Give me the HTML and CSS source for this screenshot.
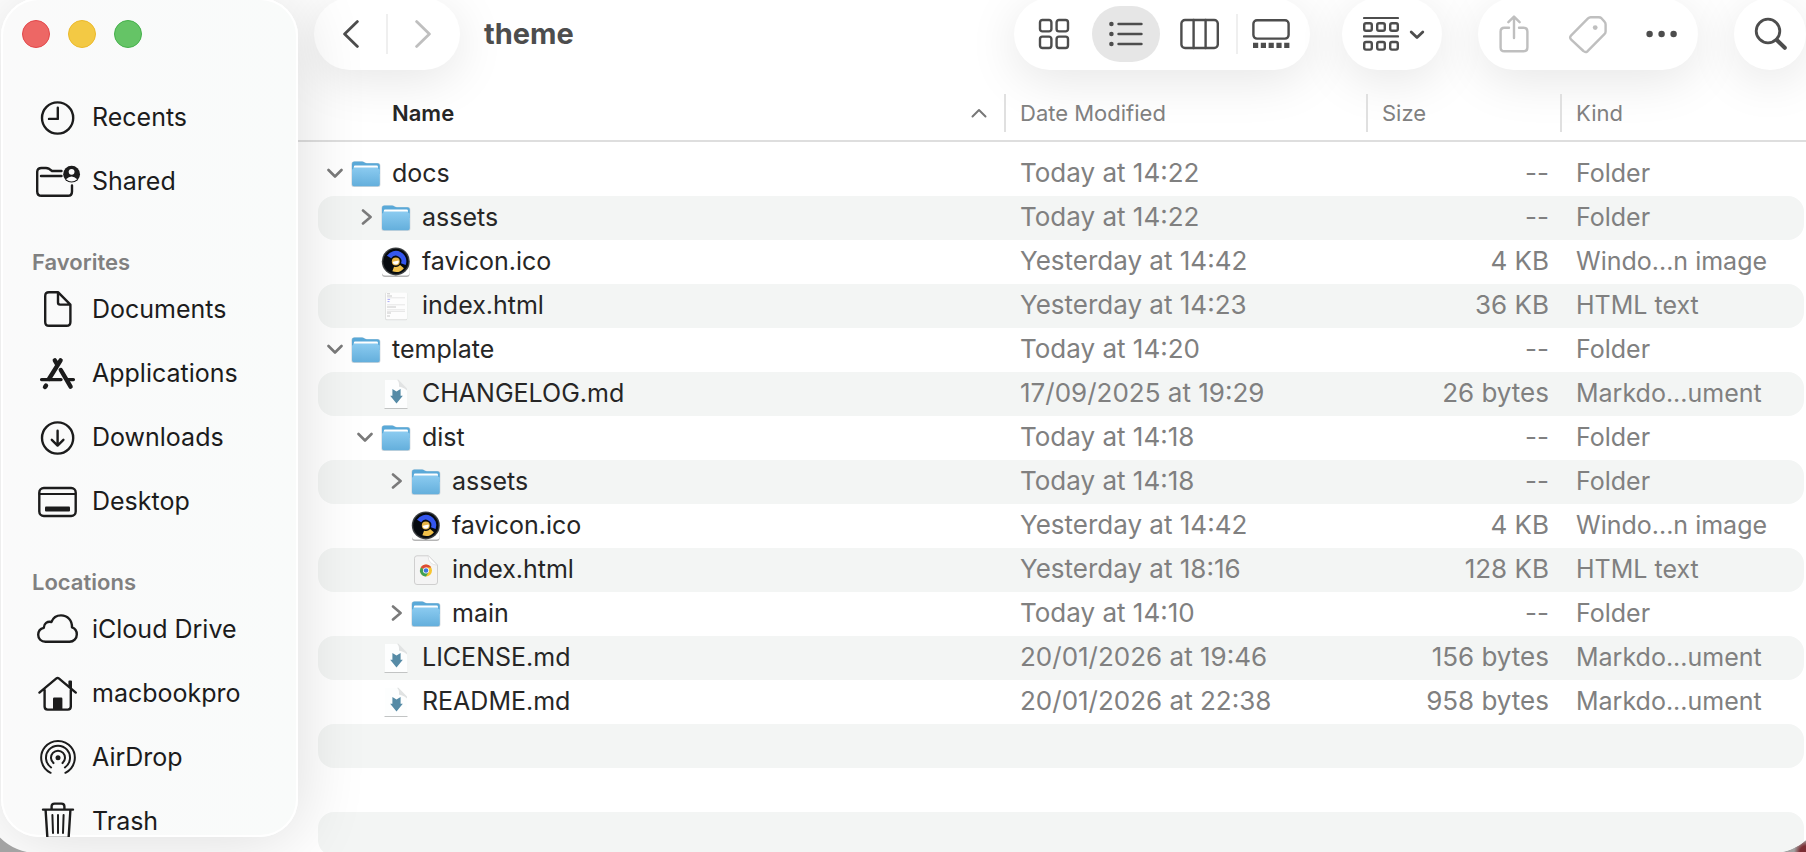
FILE: index.html
```html
<!DOCTYPE html>
<html lang="en">
<head>
    <meta charset="UTF-8">
    <meta name="viewport" content="width=device-width, initial-scale=1.0">
    <title>theme</title>
    <link rel="stylesheet" href="styles.css">
</head>
<body>
    <!-- Shared file icons -->
    <svg class="icon-defs" width="0" height="0" aria-hidden="true">
        <defs>
            <linearGradient id="folder-front" x1="0" y1="0" x2="0" y2="1">
                <stop offset="0" stop-color="#8bcbf0"/>
                <stop offset="1" stop-color="#64afdc"/>
            </linearGradient>
        </defs>
        <symbol id="chevron-down" viewBox="0 0 16 16">
            <path d="M1.5 5L8 11.5L14.5 5" fill="none" stroke="#7a7a7a" stroke-width="2.6" stroke-linecap="round" stroke-linejoin="round"/>
        </symbol>
        <symbol id="chevron-right" viewBox="0 0 16 16">
            <path d="M6 1.5L13.6 8L6 14.5" fill="none" stroke="#7a7a7a" stroke-width="2.6" stroke-linecap="round" stroke-linejoin="round"/>
        </symbol>
        <symbol id="folder" viewBox="0 0 30 30">
            <path d="M.4 5Q.4 2.4 3 2.4H11Q12.5 2.4 13.5 3.2T16 4H26.6Q29.4 4 29.4 6.6V26Q29.4 28 27.4 28H2.6Q.4 28 .4 26Z" fill="#d3d8dc"/>
            <path d="M1 5Q1 2.6 3.4 2.6H11Q12.5 2.6 13.5 3.4T16 4.2H26.4Q28.8 4.2 28.8 6.6V15H1Z" fill="#5aa9d8"/>
            <path d="M2.8 8Q2.8 6.6 4.2 6.6H25.6Q27 6.6 27 8V12H2.8Z" fill="#fff"/>
            <path d="M1 10.5Q2.8 10.5 3 8.6H26.8Q27 10.5 28.8 10.5V25.2Q28.8 27.2 26.8 27.2H3Q1 27.2 1 25.2Z" fill="url(#folder-front)"/>
        </symbol>
        <symbol id="ico-file" viewBox="0 0 30 30">
            <path d="M1 18H28.6V27Q28.6 30 25.6 30H4Q1 30 1 27Z" fill="#b5b5b5"/>
            <path d="M1 17H28.6V25.5Q28.6 28.5 25.6 28.5H4Q1 28.5 1 25.5Z" fill="#fff"/>
            <circle cx="14.8" cy="14.4" r="14" fill="#3d4042"/>
            <circle cx="14.8" cy="14.4" r="12.6" fill="#070b0f"/>
            <path d="M8.1 10A8 8 0 0 1 22.3 17.2" fill="none" stroke="#3557ee" stroke-width="5"/>
            <path d="M21 19.6A8 8 0 0 1 12.2 22" fill="none" stroke="#f0c04a" stroke-width="5"/>
            <circle cx="14.8" cy="14.4" r="4" fill="#e5b345"/>
            <path d="M11.8 14.8L17.6 13.6A3 3 0 0 1 11.8 15.4Z" fill="#fff"/>
        </symbol>
        <symbol id="html-page" viewBox="0 0 30 30">
            <rect x="4.2" y="1.2" width="22" height="28" rx="1.5" fill="#dcdedd"/>
            <rect x="5" y="1.2" width="21" height="27" rx="1" fill="#fdfdfd"/>
            <path d="M6 2.8h3M6 5h5M6 16h9M6 22h4M6 25h3" stroke="#c9c9c9"/>
            <path d="M6 6.8h18M6 13.8h18M6 18.8h18M6 20.4h18" stroke="#e6e6e6"/>
            <path d="M6.5 8.4h2.6M6.5 10.6h2" stroke="#a9a9f5"/>
        </symbol>
        <symbol id="md-page" viewBox="0 0 30 30">
            <path d="M3.5 29.5H26.5" stroke="#c2c4c4"/>
            <path d="M4 1H17L26 10V29H4Z" fill="#fdfefe"/>
            <path d="M16 .8Q18.5 3 18 7.8Q21.5 7.8 26 11.5V9.5L17.5 .8Z" fill="#e1e3e3"/>
            <path d="M11.4 10L15.5 12.4L19.6 10V16.8H21.8L15.5 24.6L9.2 16.8H11.4Z" fill="#568ba6"/>
        </symbol>
        <symbol id="chrome-page" viewBox="0 0 30 30">
            <path d="M6 .8H17.5L26.5 10V27Q26.5 29.5 24 29.5H6Q3.5 29.5 3.5 27V3.3Q3.5 .8 6 .8Z" fill="#f4f4f4" stroke="#cfcfcf"/>
            <path d="M17 1Q17.5 9.8 26.3 10.2L17.6 1Z" fill="#fff" stroke="#dadada" stroke-width=".7"/>
            <circle cx="15" cy="15.5" r="6" fill="#f7c52f"/>
            <path d="M15 15.5L9.8 12.5A6 6 0 0 1 20.2 12.5H15Z" fill="#dc4a38"/>
            <path d="M15 15.5L9.8 12.5A6 6 0 0 0 15 21.5L17.6 17Z" fill="#3fa055"/>
            <circle cx="15" cy="15.5" r="3" fill="#fff"/>
            <circle cx="15" cy="15.5" r="2.3" fill="#3e76e0"/>
        </symbol>
    </svg>

    <div class="window">
        <!-- Sidebar -->
        <aside class="sidebar">
            <div class="traffic-lights">
                <button class="light close" aria-label="Close"></button>
                <button class="light minimize" aria-label="Minimize"></button>
                <button class="light zoom" aria-label="Zoom"></button>
            </div>
            <nav>
                <a class="side-item" href="#">
                    <svg class="side-icon" viewBox="0 0 48 40"><circle cx="23.6" cy="21" r="15.6"/><path d="M23.8 10.8V21.9H15"/></svg>
                    Recents
                </a>
                <a class="side-item" href="#">
                    <svg class="side-icon" viewBox="0 0 48 40">
                        <path d="M27.5 10H18L14.6 7.6Q13.6 7 12 7H7.5Q3.2 7 3.2 11V30.5Q3.2 34.8 7.5 34.8H34Q38 34.8 38 30.5V24.5M7 15H27.5"/>
                        <circle class="solid" cx="37.6" cy="13.2" r="8.4"/>
                        <circle class="knockout" cx="37.6" cy="10.8" r="2.9"/>
                        <path class="knockout" d="M32 18.2Q37.6 12.8 43.2 18.2Q37.6 22.6 32 18.2Z"/>
                    </svg>
                    Shared
                </a>
                <h2>Favorites</h2>
                <a class="side-item" href="#">
                    <svg class="side-icon" viewBox="0 0 48 40"><path d="M15 3.2H24L36.4 15.6V33Q36.4 36.8 32.6 36.8H15Q11.2 36.8 11.2 33V7Q11.2 3.2 15 3.2ZM24 3.5V13.6Q24 15.6 26 15.6H36"/></svg>
                    Documents
                </a>
                <a class="side-item" href="#">
                    <svg class="side-icon" viewBox="0 0 48 40">
                        <path class="thick" d="M26.6 7.4L15 26M20.8 7.4L23 11M26.8 17L36.6 33.6M12 32.6L11 34"/>
                        <path d="M7.6 26.6H27M34 26.6H39.4" stroke-width="3.4"/>
                    </svg>
                    Applications
                </a>
                <a class="side-item" href="#">
                    <svg class="side-icon" viewBox="0 0 48 40"><circle cx="23.6" cy="21" r="15.6"/><path d="M23.6 13.8V28.4M17.8 22.8L23.6 28.6L29.4 22.8"/></svg>
                    Downloads
                </a>
                <a class="side-item" href="#">
                    <svg class="side-icon" viewBox="0 0 48 40">
                        <rect x="5.3" y="7" width="36.4" height="28" rx="4.5"/>
                        <path d="M5.5 13H41.5" stroke-width="1.8"/>
                        <rect class="solid" x="11" y="25.4" width="25" height="5" rx="1"/>
                    </svg>
                    Desktop
                </a>
                <h2>Locations</h2>
                <a class="side-item" href="#">
                    <svg class="side-icon" viewBox="0 0 48 40"><path d="M11.5 32.8C7 32.8 4.2 29.6 4.2 25.8C4.2 22 6.6 19.6 9.8 18.8C9.8 14.4 13.4 12 17.4 13C19 9 22.6 6.4 27 6.4C33.6 6.4 38.2 11.4 38 18.4C41 19.4 42.8 22 42.8 25.4C42.8 29.5 39.6 32.8 35.5 32.8Z"/></svg>
                    iCloud Drive
                </a>
                <a class="side-item" href="#">
                    <svg class="side-icon" viewBox="0 0 48 40">
                        <path d="M5.4 19.6L22.4 5.4Q23.6 4.4 24.8 5.4L41.8 19.6M10.6 17V33.6Q10.6 36.6 13.6 36.6H33.8Q36.8 36.6 36.8 33.6V17"/>
                        <path class="solid" d="M34.4 13V8.4Q34.4 7.4 35.4 7.4H37Q38 7.4 38 8.4V16ZM19 36.6V25.8Q19 24.6 20.2 24.6H27.2Q28.4 24.6 28.4 25.8V36.6Z"/>
                    </svg>
                    macbookpro
                </a>
                <a class="side-item" href="#">
                    <svg class="side-icon" viewBox="0 0 48 40">
                        <path d="M16.6 35.8A16.8 16.8 0 1 1 31.4 35.8M17.1 30.5A12 12 0 1 1 30.9 30.5M19.5 26.1A7 7 0 1 1 28.5 26.1" stroke-width="2"/>
                        <circle class="solid" cx="24" cy="20.7" r="2.5"/>
                    </svg>
                    AirDrop
                </a>
                <a class="side-item" href="#">
                    <svg class="side-icon" viewBox="0 0 48 40">
                        <path d="M9 8.6H39M17.6 8.4V5.6Q17.6 2.6 20.6 2.6H27.4Q30.4 2.6 30.4 5.6V8.4M11.6 9L13.4 37H34.6L36.4 9"/>
                        <path d="M18.4 14L19 32M24 14V32M29.6 14L29 32" stroke-width="2"/>
                    </svg>
                    Trash
                </a>
            </nav>
        </aside>

        <main class="content">
            <!-- Toolbar -->
            <header class="toolbar">
                <div class="pill history">
                    <button aria-label="Back"><svg width="18" height="30" viewBox="0 0 18 30"><path d="M16.4 2.6L3.6 15L16.4 27.4" stroke-width="2.8"/></svg></button>
                    <span class="divider"></span>
                    <button class="dim" aria-label="Forward"><svg width="18" height="30" viewBox="0 0 18 30"><path d="M1.6 2.6L14.4 15L1.6 27.4" stroke-width="2.8"/></svg></button>
                </div>
                <h1>theme</h1>
                <div class="view-options">
                    <div class="pill views">
                        <button aria-label="Icons">
                            <svg width="32" height="32" viewBox="0 0 32 32"><rect x="2" y="2" width="11.4" height="11.4" rx="2.4"/><rect x="18.6" y="2" width="11.4" height="11.4" rx="2.4"/><rect x="2" y="18.6" width="11.4" height="11.4" rx="2.4"/><rect x="18.6" y="18.6" width="11.4" height="11.4" rx="2.4"/></svg>
                        </button>
                        <button class="selected" aria-label="List">
                            <svg width="34" height="26" viewBox="0 0 34 26"><path d="M9.6 3H32.4M9.6 13H32.4M9.6 23H32.4" stroke-width="2.6"/><circle class="solid" cx="2.4" cy="3" r="2.3"/><circle class="solid" cx="2.4" cy="13" r="2.3"/><circle class="solid" cx="2.4" cy="23" r="2.3"/></svg>
                        </button>
                        <button aria-label="Columns">
                            <svg width="40" height="32" viewBox="0 0 40 32"><rect x="2.4" y="2" width="36.4" height="28" rx="3.6"/><path d="M14.6 2V30M26.6 2V30"/></svg>
                        </button>
                        <span class="divider"></span>
                        <button aria-label="Gallery">
                            <svg width="40" height="32" viewBox="0 0 40 32"><rect x="1.4" y="2.2" width="35.2" height="18.4" rx="3.6"/><path d="M1 27.4H38" stroke-width="5.2" stroke-linecap="butt" stroke-dasharray="5.2 2.6"/></svg>
                        </button>
                    </div>
                    <div class="pill group-by">
                        <button aria-label="Group by">
                            <svg width="36" height="36" viewBox="0 0 36 36"><path d="M1 2H35M1 20.4H35" stroke-width="2.2"/><rect x="1.2" y="7.2" width="7.6" height="7.6" rx="1.8"/><rect x="14.2" y="7.2" width="7.6" height="7.6" rx="1.8"/><rect x="27.2" y="7.2" width="7.6" height="7.6" rx="1.8"/><rect x="1.2" y="26" width="7.6" height="7.6" rx="1.8"/><rect x="14.2" y="26" width="7.6" height="7.6" rx="1.8"/><rect x="27.2" y="26" width="7.6" height="7.6" rx="1.8"/></svg>
                            <svg width="16" height="12" viewBox="0 0 16 12"><path d="M2.2 4L8 9.6L13.8 4" stroke-width="2.8"/></svg>
                        </button>
                    </div>
                </div>
                <div class="pill actions">
                    <button class="dim" aria-label="Share">
                        <svg width="32" height="38" viewBox="0 0 32 38"><path d="M10 12.8H5.4Q1.6 12.8 1.6 16.6V32.4Q1.6 36.2 5.4 36.2H24.6Q28.4 36.2 28.4 32.4V16.6Q28.4 12.8 24.6 12.8H20M15 23V1.8M9.4 7.2L15 1.6L20.6 7.2"/></svg>
                    </button>
                    <button class="dim" aria-label="Tags">
                        <svg width="40" height="40" viewBox="0 0 40 40"><path d="M22.6 3.2H30.8Q32.4 3.2 33.4 4.2L36.6 7.8Q37.6 8.8 37.6 10.4V17.4Q37.6 19 36.4 20.2L19.6 37.2Q17.4 39 15.4 37L3.2 25.6Q1 23.6 3.2 21.4L20 4.4Q21.2 3.2 22.6 3.2Z"/><circle class="solid" cx="27.2" cy="13.6" r="2.4"/></svg>
                    </button>
                    <button aria-label="More">
                        <svg width="32" height="8" viewBox="0 0 32 8"><circle class="solid" cx="4.6" cy="4" r="3.2"/><circle class="solid" cx="16.6" cy="4" r="3.2"/><circle class="solid" cx="28.6" cy="4" r="3.2"/></svg>
                    </button>
                </div>
                <div class="pill search">
                    <button aria-label="Search">
                        <svg width="34" height="34" viewBox="0 0 34 34"><circle cx="15" cy="14" r="11.8" stroke-width="2.8"/><path d="M23.8 23L31.8 30.8" stroke-width="4"/></svg>
                    </button>
                </div>
            </header>

            <!-- File list -->
            <table class="files">
                <thead>
                    <tr>
                        <th class="sorted">Name <svg width="16" height="10" viewBox="0 0 16 10"><path d="M1.5 8.5L8 2L14.5 8.5"/></svg></th>
                        <th>Date Modified</th>
                        <th>Size</th>
                        <th>Kind</th>
                    </tr>
                </thead>
                <tbody>
                    <tr>
                        <td class="name"><button class="toggle" aria-label="Collapse docs"><svg><use href="#chevron-down"/></svg></button><svg class="file-icon"><use href="#folder"/></svg>docs</td>
                        <td class="date">Today at 14:22</td><td class="size">--</td><td>Folder</td>
                    </tr>
                    <tr>
                        <td class="name level-1"><button class="toggle" aria-label="Expand assets"><svg><use href="#chevron-right"/></svg></button><svg class="file-icon"><use href="#folder"/></svg>assets</td>
                        <td class="date">Today at 14:22</td><td class="size">--</td><td>Folder</td>
                    </tr>
                    <tr>
                        <td class="name level-1"><span class="toggle"></span><svg class="file-icon"><use href="#ico-file"/></svg>favicon.ico</td>
                        <td class="date">Yesterday at 14:42</td><td class="size">4 KB</td><td>Windo...n image</td>
                    </tr>
                    <tr>
                        <td class="name level-1"><span class="toggle"></span><svg class="file-icon"><use href="#html-page"/></svg>index.html</td>
                        <td class="date">Yesterday at 14:23</td><td class="size">36 KB</td><td>HTML text</td>
                    </tr>
                    <tr>
                        <td class="name"><button class="toggle" aria-label="Collapse template"><svg><use href="#chevron-down"/></svg></button><svg class="file-icon"><use href="#folder"/></svg>template</td>
                        <td class="date">Today at 14:20</td><td class="size">--</td><td>Folder</td>
                    </tr>
                    <tr>
                        <td class="name level-1"><span class="toggle"></span><svg class="file-icon"><use href="#md-page"/></svg>CHANGELOG.md</td>
                        <td class="date">17/09/2025 at 19:29</td><td class="size">26 bytes</td><td>Markdo...ument</td>
                    </tr>
                    <tr>
                        <td class="name level-1"><button class="toggle" aria-label="Collapse dist"><svg><use href="#chevron-down"/></svg></button><svg class="file-icon"><use href="#folder"/></svg>dist</td>
                        <td class="date">Today at 14:18</td><td class="size">--</td><td>Folder</td>
                    </tr>
                    <tr>
                        <td class="name level-2"><button class="toggle" aria-label="Expand assets"><svg><use href="#chevron-right"/></svg></button><svg class="file-icon"><use href="#folder"/></svg>assets</td>
                        <td class="date">Today at 14:18</td><td class="size">--</td><td>Folder</td>
                    </tr>
                    <tr>
                        <td class="name level-2"><span class="toggle"></span><svg class="file-icon"><use href="#ico-file"/></svg>favicon.ico</td>
                        <td class="date">Yesterday at 14:42</td><td class="size">4 KB</td><td>Windo...n image</td>
                    </tr>
                    <tr>
                        <td class="name level-2"><span class="toggle"></span><svg class="file-icon"><use href="#chrome-page"/></svg>index.html</td>
                        <td class="date">Yesterday at 18:16</td><td class="size">128 KB</td><td>HTML text</td>
                    </tr>
                    <tr>
                        <td class="name level-2"><button class="toggle" aria-label="Expand main"><svg><use href="#chevron-right"/></svg></button><svg class="file-icon"><use href="#folder"/></svg>main</td>
                        <td class="date">Today at 14:10</td><td class="size">--</td><td>Folder</td>
                    </tr>
                    <tr>
                        <td class="name level-1"><span class="toggle"></span><svg class="file-icon"><use href="#md-page"/></svg>LICENSE.md</td>
                        <td class="date">20/01/2026 at 19:46</td><td class="size">156 bytes</td><td>Markdo...ument</td>
                    </tr>
                    <tr>
                        <td class="name level-1"><span class="toggle"></span><svg class="file-icon"><use href="#md-page"/></svg>README.md</td>
                        <td class="date">20/01/2026 at 22:38</td><td class="size">958 bytes</td><td>Markdo...ument</td>
                    </tr>
                    <!-- Empty rows -->
                    <tr></tr>
                    <tr></tr>
                    <tr></tr>
                </tbody>
            </table>
        </main>
    </div>
</body>
</html>
```

FILE: styles.css
```css
* {
    box-sizing: border-box;
}

body {
    margin: 0;
    height: 100vh;
    overflow: hidden;
    font-family: Inter, "Liberation Sans", sans-serif;
    font-size: 25px;
    line-height: 32px;
    color: #262626;
    background: radial-gradient(circle at bottom right, #7b2d33 0, #7b2d33 6px, #a3a3a3 12px);
}

button {
    padding: 0;
    border: none;
    background: none;
    color: inherit;
    font: inherit;
}

h1,
h2 {
    margin: 0;
}

.icon-defs {
    position: absolute;
}

/* The window runs a little past the screen edges */
.window {
    display: flex;
    height: calc(100vh + 19px);
    margin: -18px -18px 0 -15px;
    padding: 16px 0 0 16px;
    border-radius: 52px;
    background: #fff;
    overflow: hidden;
}

/* Sidebar */
.sidebar {
    position: relative;
    z-index: 1;
    flex: 0 0 297px;
    height: calc(100vh - 13px);
    padding-top: 22px;
    border-radius: 38px;
    background: linear-gradient(90deg, #fafafa, #f9fbfa);
    box-shadow: inset 0 0 0 2px #fff, 0 4px 70px rgba(0, 0, 0, 0.14);
    overflow: hidden;
}

.traffic-lights {
    display: flex;
    gap: 18px;
    padding-left: 21px;
    margin-bottom: 37px;
}

.light {
    width: 28px;
    height: 28px;
    border: 1px solid;
    border-radius: 50%;
}

.close {
    background: #ed6765;
    border-color: #e2474a;
}

.minimize {
    background: #f3c944;
    border-color: #ebb92b;
}

.zoom {
    background: #65c466;
    border-color: #45b04b;
}

.side-item {
    display: flex;
    align-items: center;
    gap: 10px;
    height: 64px;
    padding-left: 33px;
    color: #1c1c1c;
    text-decoration: none;
}

.side-icon {
    width: 48px;
    height: 40px;
    fill: none;
    stroke: #1c1c1c;
    stroke-width: 2.4;
    stroke-linecap: round;
    stroke-linejoin: round;
}

.side-icon .solid {
    fill: #1c1c1c;
    stroke: none;
}

.side-icon .knockout {
    fill: #fafafa;
    stroke: none;
}

.side-icon .thick {
    stroke-width: 4.4;
}

.sidebar h2 {
    padding: 34px 0 0 31px;
    font-size: 22px;
    line-height: 30px;
    font-weight: 600;
    color: #808080;
}

/* Toolbar */
.content {
    flex: 1;
    min-width: 0;
}

.toolbar {
    display: flex;
    gap: 36px;
    padding: 0 18px 0 16px;
}

.toolbar h1 {
    flex: 1;
    margin-left: -12px;
    font-size: 29px;
    line-height: 72px;
    font-weight: 700;
    color: #4d4d4d;
}

.pill {
    display: flex;
    align-items: center;
    height: 72px;
    border-radius: 36px;
    background: #fff;
    box-shadow: 0 10px 50px rgba(0, 0, 0, 0.1);
}

.pill button {
    display: flex;
    flex: 1;
    align-items: center;
    justify-content: center;
    gap: 10px;
    height: 56px;
    color: #4d4d4d;
}

.pill .dim {
    color: #bfbfbf;
}

.pill svg {
    fill: none;
    stroke: currentColor;
    stroke-width: 2.4;
    stroke-linecap: round;
    stroke-linejoin: round;
}

.pill .solid {
    fill: currentColor;
    stroke: none;
}

.pill .selected {
    margin: 0 2px;
    border-radius: 28px;
    background: #e6e6e6;
}

.divider {
    width: 2px;
    height: 40px;
    background: #efefef;
}

.history {
    width: 146px;
}

.view-options {
    display: flex;
    gap: 32px;
}

.views {
    display: grid;
    grid-template-columns: 72px 72px 74px 2px 68px;
    padding: 0 4px;
}

.group-by {
    width: 100px;
    padding-left: 3px;
}

.actions {
    width: 220px;
}

.search {
    width: 72px;
}

/* File list */
.files,
.files thead,
.files tbody {
    display: block;
}

.files tr {
    display: grid;
    grid-template-columns: minmax(0, 1fr) 362px 194px 244px;
}

.files thead tr {
    padding: 24px 20px 8px;
    border-bottom: 2px solid #dedede;
}

.files th {
    padding: 0 0 0 14px;
    border-left: 2px solid #e0e0e0;
    font-size: 22px;
    line-height: 38px;
    font-weight: 400;
    text-align: left;
    color: #808080;
}

.files .sorted {
    display: flex;
    align-items: center;
    justify-content: space-between;
    padding: 0 17px 0 74px;
    border: none;
    font-weight: 600;
    color: #262626;
}

.sorted svg {
    fill: none;
    stroke: #777;
    stroke-width: 2;
    stroke-linecap: round;
    stroke-linejoin: round;
}

.files tbody {
    padding: 10px 20px 0;
}

.files tbody tr {
    height: 44px;
    border-radius: 16px;
}

.files tbody tr:nth-child(even) {
    background: #f3f5f4;
}

.files td {
    padding: 0 0 2px 16px;
    line-height: 42px;
    color: #808080;
    white-space: nowrap;
}

.files .name {
    display: flex;
    align-items: center;
    padding-left: 0;
    color: #262626;
}

.files .level-1 {
    padding-left: 30px;
}

.files .level-2 {
    padding-left: 60px;
}

.files .date,
.files .size {
    font-size: 26px;
}

.files .size {
    padding-right: 11px;
    text-align: right;
}

.toggle {
    display: flex;
    justify-content: center;
    width: 33px;
}

.toggle svg {
    width: 16px;
    height: 16px;
}

.file-icon {
    width: 30px;
    height: 30px;
    margin: 2px 11px 0 0;
}
```
